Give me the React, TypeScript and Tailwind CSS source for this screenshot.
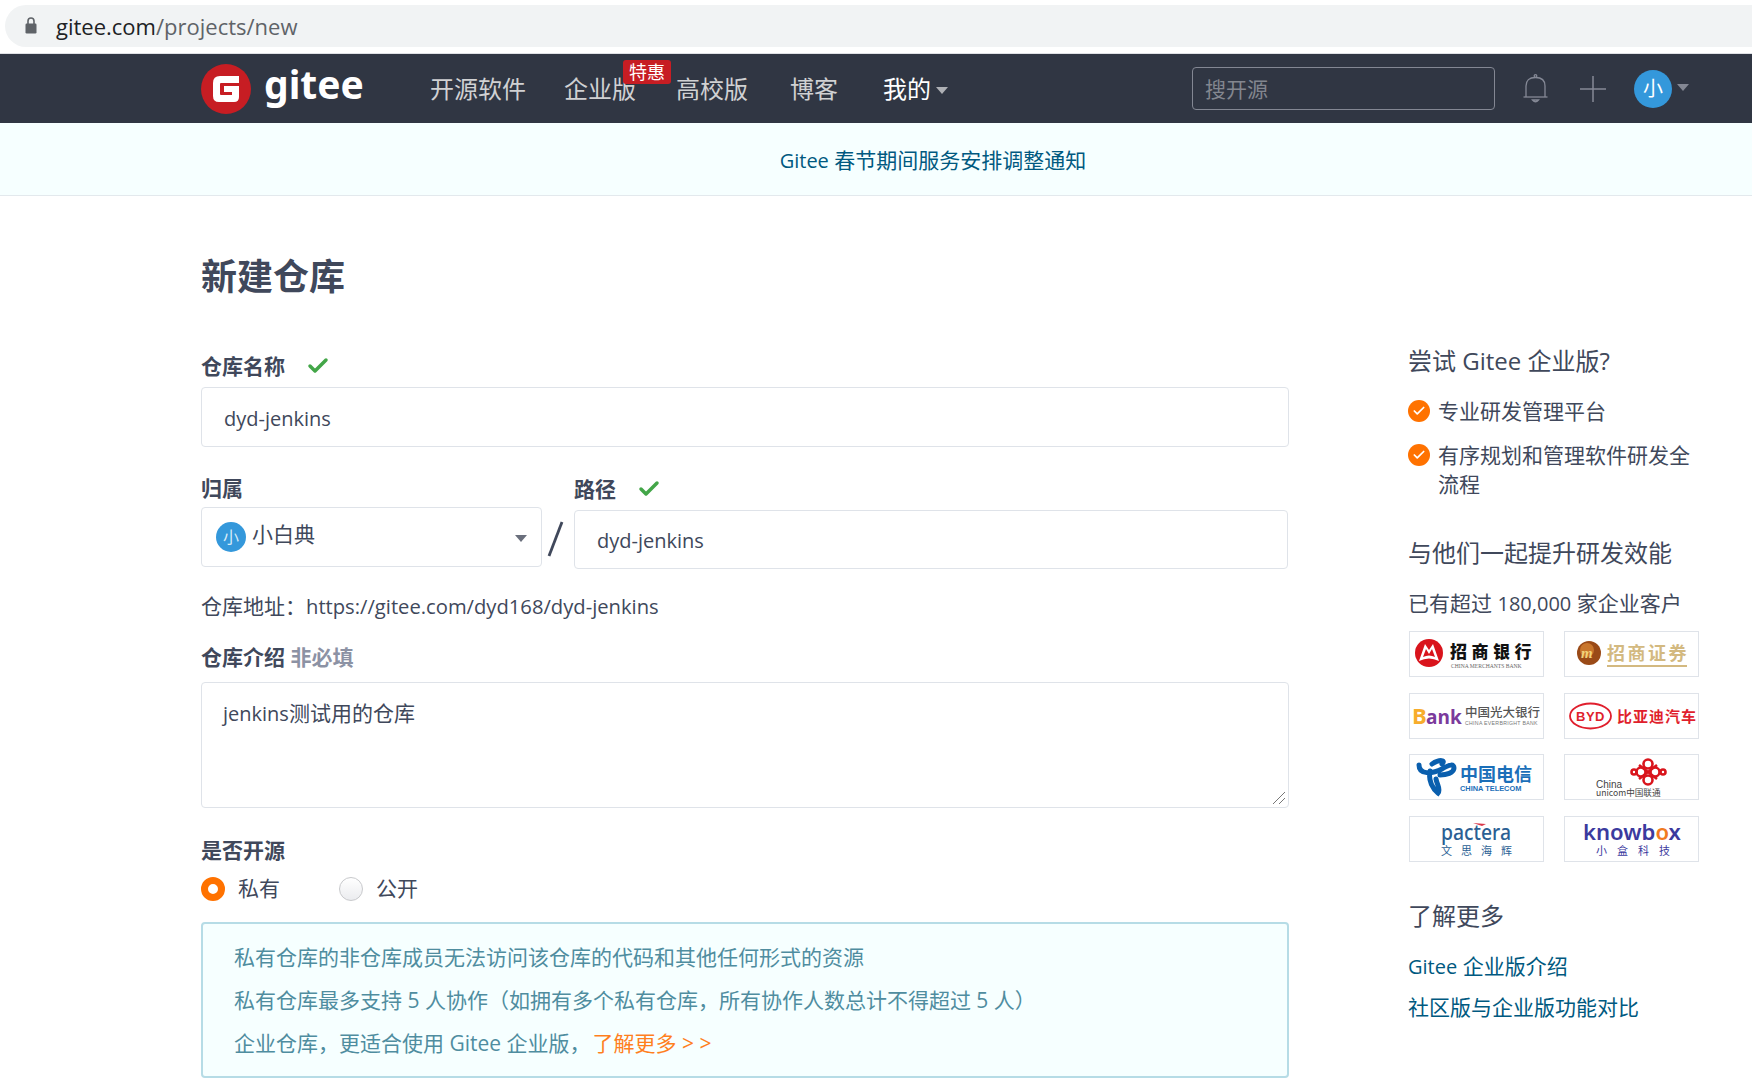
import { Check } from "lucide-react";

const logoFont = "'Noto Sans CJK SC', sans-serif";

function LogoBox({ children }: { children: React.ReactNode }) {
  return (
    <div className="w-[135px] h-[46px] border border-[#dfe3e9] bg-white">
      <svg viewBox="0 0 133 44" className="w-full h-full overflow-visible">{children}</svg>
    </div>
  );
}

function Caret({ className }: { className: string }) {
  return <span className={`border-x-[6px] border-x-transparent border-t-[7px] ${className}`}></span>;
}

function OrangeCheck() {
  return (
    <span className="w-[22px] h-[22px] rounded-full bg-[#ff7200] flex items-center justify-center shrink-0 mt-[3px]">
      <Check className="w-[14px] h-[14px] text-white" strokeWidth={3} />
    </span>
  );
}

function Logos() {
  return (
    <div className="grid grid-cols-[135px_135px] gap-x-[20px] gap-y-[15.5px] mt-[13px] ml-[1px]">
      <LogoBox>
        <circle cx="19" cy="21" r="14" fill="#d9141c" />
        <path d="M9 29 L15 12 L19 18 L23 12 L29 29 Q19 24 9 29 Z M13 25 Q19 22 25 25 L22 17 L19 22 L16 17 Z" fill="#fff" fillRule="evenodd" />
        <text x="40" y="26" fontSize="17" fontWeight="900" fill="#111" letterSpacing="4.5" fontFamily={logoFont}>招商银行</text>
        <text x="41" y="36" fontSize="5.6" fill="#666" fontFamily="'Liberation Serif', serif">CHINA MERCHANTS BANK</text>
      </LogoBox>
      <LogoBox>
        <circle cx="24" cy="21" r="12" fill="#9a4a17" />
        <circle cx="22" cy="18" r="7" fill="#c9762c" />
        <text x="16" y="26" fontSize="15" fontStyle="italic" fontWeight="700" fill="#f1d27a" fontFamily="'Liberation Serif', serif">m</text>
        <text x="42" y="28" fontSize="18" fontWeight="700" fill="#d3b980" letterSpacing="2.5" fontFamily={logoFont}>招商证券</text>
        <rect x="42" y="33" width="80" height="2" fill="#d3b980" />
      </LogoBox>
      <LogoBox>
        <text x="2" y="30" fontSize="22" fontWeight="700" fill="#f7ad2c" fontFamily="'Open Sans', sans-serif">B</text>
        <text x="16" y="30" fontSize="19" fontWeight="700" fill="#7b3a9c" fontFamily="'Open Sans', sans-serif">ank</text>
        <text x="55" y="23" fontSize="12.5" fontWeight="500" fill="#555" fontFamily={logoFont}>中国光大银行</text>
        <text x="55" y="31" fontSize="5.2" fill="#777" letterSpacing="0.3" fontFamily="'Liberation Sans', sans-serif">CHINA EVERBRIGHT BANK</text>
      </LogoBox>
      <LogoBox>
        <ellipse cx="25.5" cy="22" rx="20.5" ry="12.5" fill="none" stroke="#e01f2d" strokeWidth="1.8" />
        <text x="11" y="27" fontSize="13" fontWeight="700" fill="#e01f2d" letterSpacing="0.5" fontFamily="'Liberation Sans', sans-serif">BYD</text>
        <text x="52" y="28" fontSize="15" fontWeight="700" fill="#e01f2d" letterSpacing="1" fontFamily={logoFont}>比亚迪汽车</text>
      </LogoBox>
      <LogoBox>
        <path d="M9 10 C9 20 22 19 32 14 C40 9 44 9 44 13 C44 18 36 20 30 20 M22 9 C30 4 36 5 32 9 M20 16 C18 26 23 34 28 38 C31 34 27 30 26 24" fill="none" stroke="#0a5fae" strokeWidth="5" strokeLinecap="round" />
        <text x="50" y="26" fontSize="18" fontWeight="700" fill="#1b6fb9" fontFamily={logoFont}>中国电信</text>
        <text x="50" y="36" fontSize="7.4" fontWeight="700" fill="#1b6fb9" fontFamily="'Liberation Sans', sans-serif">CHINA TELECOM</text>
      </LogoBox>
      <LogoBox>
        <g fill="none" stroke="#d9141c" strokeWidth="2.6">
          <circle cx="83" cy="9" r="4.5" />
          <circle cx="90" cy="17" r="4.5" />
          <circle cx="76" cy="17" r="4.5" />
          <circle cx="83" cy="25" r="4.5" />
          <circle cx="69" cy="17" r="2.5" />
          <circle cx="98" cy="17" r="2.5" />
          <path d="M74 10 L92 24 M92 10 L74 24" />
        </g>
        <text x="31" y="33" fontSize="10" fill="#444" fontFamily="'Liberation Sans', sans-serif">China</text>
        <text x="31" y="41" fontSize="8.6" fill="#444" fontFamily={logoFont}>unicom中国联通</text>
      </LogoBox>
      <LogoBox>
        <path d="M63 6 L76 7 L72 9 Z" fill="#d9384a" />
        <text x="31" y="23" fontSize="22" fontWeight="500" fill="#2b5f94" fontFamily="'Noto Sans', sans-serif" textLength="70" lengthAdjust="spacingAndGlyphs">pactera</text>
        <text x="31" y="38" fontSize="11" fill="#2b5f94" letterSpacing="9" fontFamily={logoFont}>文思海辉</text>
      </LogoBox>
      <LogoBox>
        <text x="18" y="23" fontSize="22" fontWeight="600" fill="#3b3a9e" fontFamily="'Noto Sans', sans-serif" textLength="98" lengthAdjust="spacingAndGlyphs">
          knowb<tspan fill="#f07a1f">o</tspan>x
        </text>
        <text x="31" y="38" fontSize="11" fill="#3b3a9e" letterSpacing="10" fontFamily={logoFont}>小盒科技</text>
      </LogoBox>
    </div>
  );
}

export default function App() {
  return (
    <div className="w-[1752px] h-[1088px] overflow-hidden bg-white text-[#40485b] text-[21px] font-['Open_Sans','Noto_Sans_CJK_SC',sans-serif]">
      {/* browser address bar */}
      <div className="h-[54px] pt-[5px] border-b border-[#dfe1e5]">
        <div className="h-[42px] ml-[5px] rounded-l-[21px] bg-[#f1f3f4] flex items-center pl-[20px] text-[22px]">
          <svg viewBox="0 0 12 17" className="w-[12px] h-[17px] mr-[19px] -mt-[1px]" fill="#5f6368">
            <path d="M3 7 V4 Q3 1 6 1 Q9 1 9 4 V7" fill="none" stroke="#5f6368" strokeWidth="1.6" />
            <rect x="0.5" y="6.5" width="11" height="10" rx="1.2" />
          </svg>
          <span className="text-[#202124]">gitee.com</span>
          <span className="text-[#5f6368]">/projects/new</span>
        </div>
      </div>

      {/* nav */}
      <div className="h-[69px] bg-[#303643] flex items-center pl-[201px] text-[24px] text-[#d0d1d3]">
        <svg viewBox="0 0 50 50" className="w-[50px] h-[50px]">
          <circle cx="25" cy="25" r="25" fill="#c71d23" />
          <path d="M12 19 Q12 12 19 12 H38 V19 H20 Q19 19 19 20 V30 Q19 31 20 31 H31 V28 H23 V22 H38 V33 Q38 38 33 38 H18 Q12 38 12 32 Z" fill="#fff" />
        </svg>
        <span className="w-[99px] ml-[13px] -mt-[10px] text-white text-[39px] leading-[50px] font-bold font-['Noto_Sans',sans-serif]">gitee</span>
        <span className="ml-[67px]">开源软件</span>
        <span className="ml-[38px] relative">
          企业版
          <span className="absolute left-[59px] -top-[11px] w-[48px] h-[24px] rounded-[3px] bg-[#c71d23] text-white text-[18px] leading-[24px] text-center">特惠</span>
        </span>
        <span className="ml-[40px]">高校版</span>
        <span className="ml-[42px]">博客</span>
        <span className="ml-[45px] text-white">我的</span>
        <Caret className="ml-[5px] mt-[3px] border-t-[#aeb0b5]" />
        <div className="ml-[244px] w-[303px] h-[43px] border border-[#838793] rounded-[4px] flex items-center pl-[12px] text-[21px] text-[#83868f]"><span className="mt-[2px]">搜开源</span></div>
        <svg viewBox="0 0 25 30" className="ml-[28px] w-[25px] h-[30px]" fill="none" stroke="#858996" strokeWidth="1.3">
          <circle cx="12.5" cy="2" r="1.3" />
          <path d="M3 23 V12 Q3 3.5 12.5 3.5 Q22 3.5 22 12 V23" />
          <path d="M0.5 23 H24.5" />
          <path d="M9.5 26 Q12.5 29.5 15.5 26 Z" />
        </svg>
        <svg viewBox="0 0 26 26" className="ml-[32px] w-[26px] h-[26px]" stroke="#858996" strokeWidth="1.5">
          <path d="M13 0 V26 M0 13 H26" />
        </svg>
        <span className="ml-[28px] w-[38px] h-[38px] rounded-full bg-[#3498db] text-white text-[20px] flex items-center justify-center">小</span>
        <Caret className="ml-[5px] -mt-[2px] border-t-[#838793]" />
      </div>

      {/* notice */}
      <div className="h-[73px] bg-[#f6ffff] border-b border-[#e3e9ed] flex items-center justify-center pl-[114px] pt-[4px] text-[21px] text-[#005980]">
        <span><span className="text-[20px]">Gitee</span> 春节期间服务安排调整通知</span>
      </div>

      <div className="flex pl-[201px]">
        {/* form */}
        <div className="w-[1088px]">
          <h1 className="mt-[56px] h-[50px] leading-[50px] text-[36px] font-bold">新建仓库</h1>
          <div className="mt-[52px] h-[24px] flex items-center font-bold leading-[24px]">
            仓库名称
            <Check className="ml-[21px] w-[24px] h-[24px] text-[#43a648]" strokeWidth={3.5} />
          </div>
          <div className="mt-[9px] h-[60px] border border-[#dfe3e9] rounded-[4px] flex items-center pl-[22px] pt-[3px] text-[20px]">dyd-jenkins</div>

          <div className="mt-[29px] flex">
            <div className="w-[341px]">
              <div className="h-[24px] font-bold leading-[24px]">归属</div>
              <div className="mt-[7px] h-[60px] border border-[#dfe3e9] rounded-[4px] flex items-center pl-[14px] pr-[14px]">
                <span className="w-[30px] h-[30px] rounded-full bg-[#3498db] text-[#d8ecf8] text-[16px] flex items-center justify-center">小</span>
                <span className="ml-[6px] -mt-[4px] flex-1">小白典</span>
                <Caret className="mt-[2px] border-t-[#6a6f7c]" />
              </div>
            </div>
            <div className="w-[32px] pt-[45px] pl-[4px]">
              <svg viewBox="0 0 18 36" className="w-[18px] h-[36px]" stroke="#40485b" strokeWidth="2.8"><path d="M16 1 L3 35" /></svg>
            </div>
            <div className="w-[714px] pt-[1px]">
              <div className="h-[24px] flex items-center font-bold leading-[24px]">
                路径
                <Check className="ml-[21px] w-[24px] h-[24px] text-[#43a648]" strokeWidth={3.5} />
              </div>
              <div className="mt-[9px] h-[59px] border border-[#dfe3e9] rounded-[4px] flex items-center pl-[22px] pt-[3px] text-[20px]">dyd-jenkins</div>
            </div>
          </div>

          <div className="mt-[21px] h-[32px] leading-[32px]">仓库地址：<span className="text-[20.2px]">https://gitee.com/dyd168/dyd-jenkins</span></div>
          <div className="mt-[23px] h-[24px] leading-[24px] font-bold">
            仓库介绍 <span className="text-[#8c92a4]">非必填</span>
          </div>
          <div className="mt-[13px] h-[126px] border border-[#dfe3e9] rounded-[4px] pl-[21px] pt-[14px] leading-[32px] relative">
            <span className="text-[20px]">jenkins</span>测试用的仓库
            <svg viewBox="0 0 14 14" className="absolute right-[2px] bottom-[2px] w-[14px] h-[14px]" stroke="#777" strokeWidth="1">
              <path d="M1 13 L13 1 M7 13 L13 7" />
            </svg>
          </div>
          <div className="mt-[30px] h-[24px] leading-[24px] font-bold">是否开源</div>
          <div className="mt-[15px] h-[24px] flex items-center">
            <span className="w-[24px] h-[24px] rounded-full border-[7px] border-[#ff7200] bg-white"></span>
            <span className="ml-[13px]">私有</span>
            <span className="ml-[59px] w-[24px] h-[24px] rounded-full border border-[#c8c9cc] bg-gradient-to-b from-white to-[#ebecef]"></span>
            <span className="ml-[13px]">公开</span>
          </div>
          <div className="mt-[21px] h-[156px] border-2 border-[#b6dce6] rounded-[4px] bg-[#f6ffff] pl-[31px] pt-[12px] text-[#4f8d9f] leading-[43px]">
            <div>私有仓库的非仓库成员无法访问该仓库的代码和其他任何形式的资源</div>
            <div>私有仓库最多支持 5 人协作（如拥有多个私有仓库，所有协作人数总计不得超过 5 人）</div>
            <div>企业仓库，更适合使用 Gitee 企业版，<span className="ml-[2px] text-[#ff7f1e]">了解更多 &gt; &gt;</span></div>
          </div>
        </div>

        {/* sidebar */}
        <div className="ml-[119px] w-[292px]">
          <h3 className="mt-[150px] h-[30px] leading-[30px] text-[24px]">尝试 Gitee 企业版?</h3>
          <div className="mt-[21px] flex gap-[8px] leading-[29px]">
            <OrangeCheck />
            <span>专业研发管理平台</span>
          </div>
          <div className="mt-[15px] flex gap-[8px] leading-[29px]">
            <OrangeCheck />
            <span>有序规划和管理软件研发全流程</span>
          </div>
          <h3 className="mt-[39px] h-[30px] leading-[30px] text-[24px]">与他们一起提升研发效能</h3>
          <div className="mt-[20px] h-[30px] leading-[30px]">已有超过 <span className="text-[20px]">180,000</span> 家企业客户</div>
          <Logos />
          <h3 className="mt-[39px] h-[30px] leading-[30px] text-[24px]">了解更多</h3>
          <div className="mt-[20px] h-[30px] leading-[30px] text-[#005980]"><span className="text-[20px]">Gitee</span> 企业版介绍</div>
          <div className="mt-[11px] h-[30px] leading-[30px] text-[#005980]">社区版与企业版功能对比</div>
        </div>
      </div>
    </div>
  );
}
